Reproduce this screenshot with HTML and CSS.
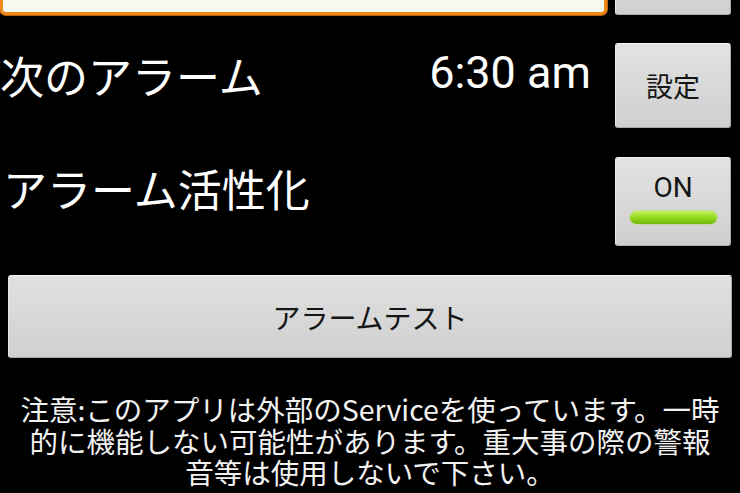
FILE: index.html
```html
<!DOCTYPE html>
<html lang="ja">
<head>
<meta charset="utf-8">
<title>アラーム</title>
<link rel="stylesheet" href="styles.css">
</head>
<body>
<div class="screen">
  <div class="row row-top">
    <div class="input"></div>
    <button class="btn btn-side"></button>
  </div>
  <div class="row row-alarm">
    <span class="label">次のアラーム</span>
    <span class="time">6:30 am</span>
    <button class="btn btn-side btn-set">設定</button>
  </div>
  <div class="row row-enable">
    <span class="label">アラーム活性化</span>
    <button class="btn btn-side btn-toggle"><span class="toggle-text">ON</span><span class="toggle-bar"></span></button>
  </div>
  <button class="btn btn-wide">アラームテスト</button>
  <p class="notice">注意:このアプリは外部のServiceを使っています。一時<br>的に機能しない可能性があります。重大事の際の警報<br>音等は使用しないで下さい。</p>
</div>
</body>
</html>
```
FILE: styles.css
```css
html, body {
  margin: 0;
  padding: 0;
  background: #000;
  overflow: hidden;
}
body {
  width: 740px;
  height: 493px;
  font-family: "Noto Sans CJK JP", "Noto Sans", sans-serif;
  color: #fff;
}
.screen {
  display: flex;
  flex-direction: column;
}
.row {
  display: flex;
  align-items: flex-start;
}
.row-top {
  margin-top: -45px;
  height: 60px;
}
.input {
  width: 602px;
  height: 54px;
  background: #f8f9f1;
  border: 3px solid #f0891c;
  border-radius: 6px;
  box-shadow: 0 0 0 1px #b86410;
}
.btn {
  font-family: "Noto Sans CJK JP", "Noto Sans", sans-serif;
  color: #151515;
  background: linear-gradient(#e2e2e2, #cfcfcf);
  border: 1px solid #aaa;
  border-top-color: #f2f2f2;
  border-left-color: #e6e6e6;
  border-radius: 3px;
  padding: 0;
  margin: 0;
  box-sizing: border-box;
}
.btn-side {
  width: 116px;
  height: 60px;
  margin-left: auto;
  margin-right: 9px;
}
.row-top .btn-side {
  margin-left: 8px;
}
.row-alarm {
  margin-top: 28px;
}
.label {
  flex: 1;
  font-size: 44px;
  line-height: 44px;
  padding-left: 3px;
  white-space: nowrap;
}
.row-alarm .label {
  margin-top: 10px;
  padding-left: 0;
}
.row-enable .label {
  margin-top: 9px;
}
.time {
  font-family: Roboto, "Liberation Sans", sans-serif;
  font-size: 45px;
  line-height: 45px;
  margin-top: 7px;
  margin-right: 24px;
}
.btn-set {
  height: 85px;
  font-size: 27px;
  line-height: 27px;
  display: flex;
  align-items: center;
  justify-content: center;
  margin-left: 0;
}
.row-enable {
  margin-top: 29px;
}
.btn-toggle {
  height: 89px;
  display: flex;
  flex-direction: column;
  align-items: center;
  padding-top: 16px;
}
.toggle-text {
  font-family: Roboto, "Liberation Sans", sans-serif;
  font-size: 28px;
  line-height: 28px;
}
.toggle-bar {
  margin-top: 9px;
  width: 87px;
  height: 13px;
  border-radius: 7px;
  background: linear-gradient(#c4f25a, #8fd61a 55%, #72b80c);
  box-shadow: 0 0 2px #9be030;
}
.btn-wide {
  margin: 29px 8px 0 8px;
  height: 83px;
  font-size: 28px;
  line-height: 28px;
  background: linear-gradient(#e0e0e0, #d0d0d0);
}
.notice {
  margin: 35px 0 0 0;
  text-align: center;
  font-size: 28.5px;
  line-height: 31.5px;
  color: #f2f2f2;
  white-space: nowrap;
}
```
